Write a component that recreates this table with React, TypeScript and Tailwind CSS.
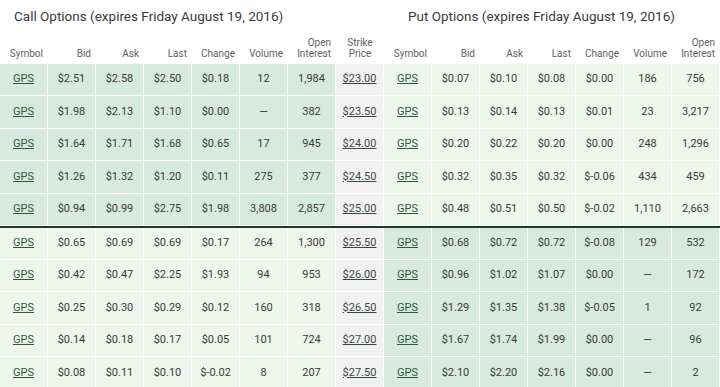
const calls = [
  ['$2.51', '$2.58', '$2.50', '$0.18', '12', '1,984'],
  ['$1.98', '$2.13', '$1.10', '$0.00', '—', '382'],
  ['$1.64', '$1.71', '$1.68', '$0.65', '17', '945'],
  ['$1.26', '$1.32', '$1.20', '$0.11', '275', '377'],
  ['$0.94', '$0.99', '$2.75', '$1.98', '3,808', '2,857'],
  ['$0.65', '$0.69', '$0.69', '$0.17', '264', '1,300'],
  ['$0.42', '$0.47', '$2.25', '$1.93', '94', '953'],
  ['$0.25', '$0.30', '$0.29', '$0.12', '160', '318'],
  ['$0.14', '$0.18', '$0.17', '$0.05', '101', '724'],
  ['$0.08', '$0.11', '$0.10', '$-0.02', '8', '207'],
];

const puts = [
  ['$0.07', '$0.10', '$0.08', '$0.00', '186', '756'],
  ['$0.13', '$0.14', '$0.13', '$0.01', '23', '3,217'],
  ['$0.20', '$0.22', '$0.20', '$0.00', '248', '1,296'],
  ['$0.32', '$0.35', '$0.32', '$-0.06', '434', '459'],
  ['$0.48', '$0.51', '$0.50', '$-0.02', '1,110', '2,663'],
  ['$0.68', '$0.72', '$0.72', '$-0.08', '129', '532'],
  ['$0.96', '$1.02', '$1.07', '$0.00', '—', '172'],
  ['$1.29', '$1.35', '$1.38', '$-0.05', '1', '92'],
  ['$1.67', '$1.74', '$1.99', '$0.00', '—', '96'],
  ['$2.10', '$2.20', '$2.16', '$0.00', '—', '2'],
];

const strikes = ['$23.00', '$23.50', '$24.00', '$24.50', '$25.00', '$25.50', '$26.00', '$26.50', '$27.00', '$27.50'];

const heads = ['Symbol', 'Bid', 'Ask', 'Last', 'Change', 'Volume'];

const Head = ({ children }: { children: React.ReactNode }) => (
  <div className="flex items-end justify-end pr-[5px] pb-[5px] text-right leading-[11px]">{children}</div>
);

const Cell = ({ dark, children }: { dark: boolean; children: React.ReactNode }) => (
  <div className={`flex items-center justify-center border-r border-b border-white ${dark ? 'bg-[#d8e9df]' : 'bg-[#eef6ec]'}`}>
    {children}
  </div>
);

const Side = ({ rows, i, dark }: { rows: string[][]; i: number; dark: boolean }) => (
  <>
    <Cell dark={dark}>
      <a className="text-[#2b5b3b] underline">GPS</a>
    </Cell>
    {rows[i].map((v, j) => (
      <Cell key={j} dark={dark}>{v}</Cell>
    ))}
  </>
);

export default function App() {
  return (
    <div className="w-[720px] h-[387px] overflow-hidden bg-white text-[#3a3a3a] font-['Roboto',sans-serif]">
      <div className="flex h-[34px] items-center pb-[1px] text-[13.5px] text-[#3a3a3a]">
        <div className="w-[384px] pl-[14px]">Call Options (expires Friday August 19, 2016)</div>
        <div className="pl-[24px]">Put Options (expires Friday August 19, 2016)</div>
      </div>
      <div className="grid grid-cols-[repeat(15,48px)] h-[29.5px] text-[10px] text-[#5f5f5f]">
        {heads.map((h) => <Head key={'c' + h}>{h}</Head>)}
        <Head>Open<br />Interest</Head>
        <div className="flex items-end justify-center pb-[5px] text-center leading-[11px]">Strike<br />Price</div>
        {heads.map((h) => <Head key={'p' + h}>{h}</Head>)}
        <Head>Open<br />Interest</Head>
      </div>
      <div className="text-[11px]">
        {strikes.map((s, i) => (
          <div
            key={s}
            className={`grid grid-cols-[repeat(15,48px)] ${i === 5 ? 'h-[33.5px] border-t-2 border-[#1d3b29]' : 'h-[32.5px]'}`}
          >
            <Side rows={calls} i={i} dark={i < 5} />
            <div className="flex items-center justify-center border-r border-b border-white bg-[#f1f1f1]">
              <a className="text-[#3d4a42] underline">{s}</a>
            </div>
            <Side rows={puts} i={i} dark={i >= 5} />
          </div>
        ))}
      </div>
    </div>
  );
}
